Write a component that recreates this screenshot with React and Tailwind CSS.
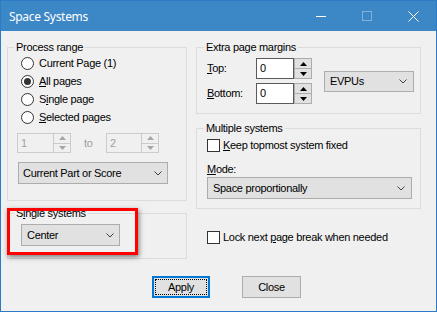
import React from "react";

function Chevron() {
  return (
    <svg width="8" height="5" viewBox="0 0 8 5" className="shrink-0">
      <polyline points="0.5,0.5 4,4 7.5,0.5" fill="none" stroke="#404040" strokeWidth="1" />
    </svg>
  );
}

function Combo({ text, className }) {
  return (
    <div className={"flex items-center justify-between bg-[#e1e1e1] border border-[#adadad] " + className}>
      <span>{text}</span>
      <Chevron />
    </div>
  );
}

function Arrow({ up, color }) {
  return (
    <svg width="7" height="4" viewBox="0 0 7 4">
      {up ? <path d="M0 4 L3.5 0 L7 4 Z" fill={color} /> : <path d="M0 0 L3.5 4 L7 0 Z" fill={color} />}
    </svg>
  );
}

function Spin({ value, disabled, className }) {
  if (disabled) {
    return (
      <div className={"flex h-[20px] border border-[#cccccc] " + className}>
        <div className="flex-1 pl-[3px] flex items-center text-[#a0a0a0]">{value}</div>
        <div className="w-[17px] flex flex-col border-l border-[#cccccc]">
          <div className="flex-1 flex items-center justify-center border-b border-[#cccccc]">
            <Arrow up color="#a6a6a6" />
          </div>
          <div className="flex-1 flex items-center justify-center">
            <Arrow color="#a6a6a6" />
          </div>
        </div>
      </div>
    );
  }
  return (
    <div className={"flex h-[21px] " + className}>
      <div className="flex-1 bg-white border border-[#5a5a5a] pl-[3px] flex items-center">{value}</div>
      <div className="w-[18px] flex flex-col border border-[#adadad] bg-[#e1e1e1]">
        <div className="flex-1 flex items-center justify-center border-b border-[#adadad]">
          <Arrow up color="#000" />
        </div>
        <div className="flex-1 flex items-center justify-center">
          <Arrow color="#000" />
        </div>
      </div>
    </div>
  );
}

function Radio({ checked, children }) {
  return (
    <div className="flex items-center h-[18px]">
      <div className="w-[13px] h-[13px] rounded-full border border-[#333333] bg-white flex items-center justify-center shrink-0">
        {checked && <div className="w-[7px] h-[7px] rounded-full bg-[#333333]" />}
      </div>
      <span className="ml-[5px]">{children}</span>
    </div>
  );
}

function Check({ children }) {
  return (
    <div className="flex items-center h-[18px]">
      <div className="w-[13px] h-[13px] border border-[#333333] bg-white shrink-0" />
      <span className="ml-[3px]">{children}</span>
    </div>
  );
}

export default function App() {
  return (
    <div className="w-[437px] h-[312px] overflow-hidden bg-[#f0f0f0] border border-[#2d7bc7] flex flex-col font-['Liberation_Sans',Arial,sans-serif] text-[11px] leading-[13px] tracking-[-0.3px] text-black">
      <div className="h-[30px] shrink-0 bg-[#3c87c6] flex items-center text-white">
        <span className="pl-[8px] flex-1 font-['Noto_Sans',sans-serif] text-[12px] tracking-[-0.3px]">Space Systems</span>
        <div className="w-[46px] h-full flex items-center justify-center">
          <svg width="10" height="1"><rect width="10" height="1" fill="#ffffff" /></svg>
        </div>
        <div className="w-[46px] h-full flex items-center justify-center">
          <svg width="10" height="10"><rect x="0.5" y="0.5" width="9" height="9" fill="none" stroke="#ffffff" strokeOpacity="0.35" /></svg>
        </div>
        <div className="w-[46px] h-full flex items-center justify-center">
          <svg width="11" height="11"><path d="M0.5 0.5 L10.5 10.5 M10.5 0.5 L0.5 10.5" stroke="#ffffff" strokeWidth="1" /></svg>
        </div>
      </div>

      <div className="flex-1 flex flex-col px-[6px] pt-[9px]">
        <div className="flex items-start gap-[9px]">
          <div className="w-[180px] flex flex-col">
            <fieldset className="h-[161px] border border-[#dcdcdc]">
              <legend className="ml-[6px] px-[2px] leading-[14px]">Process range</legend>
              <div className="pl-[13px] flex flex-col">
                <Radio>Current Page (1)</Radio>
                <Radio checked><span className="underline">A</span>ll pages</Radio>
                <Radio>S<span className="underline">i</span>ngle page</Radio>
                <Radio><span className="underline">S</span>elected pages</Radio>
              </div>
              <div className="pl-[9px] mt-[7px] flex items-center">
                <Spin disabled value="1" className="w-[54px]" />
                <span className="ml-[13px] w-[22px] text-[#a0a0a0]">to</span>
                <Spin disabled value="2" className="w-[53px]" />
              </div>
              <div className="pl-[10px] mt-[9px]">
                <Combo text="Current Part or Score" className="w-[150px] h-[22px] pl-[4px] pr-[5px]" />
              </div>
            </fieldset>

            <div className="relative mt-[5px]">
              <fieldset className="h-[53px] border border-[#dcdcdc]">
                <legend className="ml-[6px] px-[2px] leading-[14px]">S<span className="underline">i</span>ngle systems</legend>
                <div className="pl-[13px] mt-[4px]">
                  <Combo text="Center" className="w-[99px] h-[22px] pl-[5px] pr-[5px]" />
                </div>
              </fieldset>
              <div className="absolute left-0 top-[2px] w-[131px] h-[47px] border-[3px] border-[#ff0000] shadow-[1px_2px_5px_rgba(0,0,0,0.5)] pointer-events-none" />
            </div>
          </div>

          <div className="w-[225px] flex flex-col">
            <fieldset className="h-[74px] border border-[#dcdcdc]">
              <legend className="ml-[7px] px-[2px] leading-[14px]">Extra page margins</legend>
              <div className="pl-[10px] pt-[4px] flex items-center">
                <div className="flex flex-col gap-[4px]">
                  <div className="flex items-center">
                    <span className="w-[49px]"><span className="underline">T</span>op:</span>
                    <Spin value="0" className="w-[56px]" />
                  </div>
                  <div className="flex items-center">
                    <span className="w-[49px]"><span className="underline">B</span>ottom:</span>
                    <Spin value="0" className="w-[56px]" />
                  </div>
                </div>
                <Combo text="EVPUs" className="ml-[12px] w-[90px] h-[21px] pl-[5px] pr-[6px]" />
              </div>
            </fieldset>

            <fieldset className="mt-[7px] h-[88px] border border-[#dcdcdc]">
              <legend className="ml-[7px] px-[2px] leading-[14px]">Multiple systems</legend>
              <div className="pl-[10px] pr-[8px] flex flex-col">
                <div className="mt-[1px]">
                  <Check><span className="underline">K</span>eep topmost system fixed</Check>
                </div>
                <div className="mt-[9px] h-[13px]"><span className="underline">M</span>ode:</div>
                <Combo text="Space proportionally" className="mt-[1px] w-[205px] h-[22px] pl-[5px] pr-[6px]" />
              </div>
            </fieldset>

            <div className="mt-[19px] pl-[11px]">
              <Check>Lock next <span className="underline">p</span>age break when needed</Check>
            </div>
          </div>
        </div>

        <div className="mt-[17px] flex items-center gap-[32px] pl-[145px]">
          <div className="w-[58px] h-[22px] border-2 border-[#0078d7] bg-[#e1e1e1] p-[1px]">
            <div className="w-full h-full border border-dotted border-black flex items-center justify-center">Apply</div>
          </div>
          <div className="w-[59px] h-[22px] border border-[#adadad] bg-[#e1e1e1] flex items-center justify-center">Close</div>
        </div>
      </div>
    </div>
  );
}
